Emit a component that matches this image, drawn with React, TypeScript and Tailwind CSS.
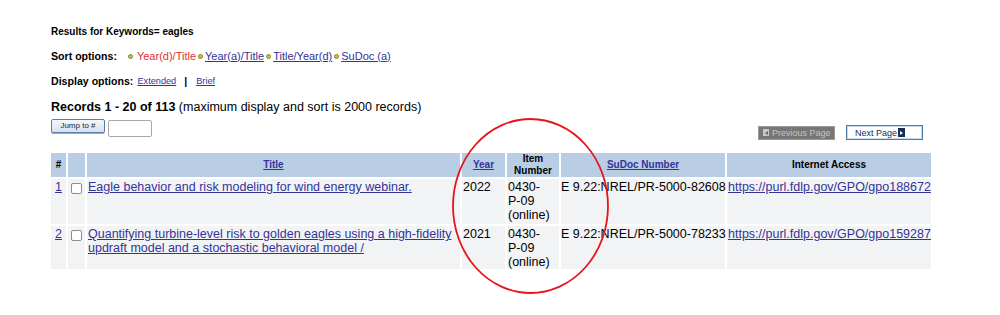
const link = 'text-[#333399] underline';

const rows = [
  {
    n: '1',
    title: 'Eagle behavior and risk modeling for wind energy webinar.',
    year: '2022',
    sudoc: 'E 9.22:NREL/PR-5000-82608',
    url: 'https://purl.fdlp.gov/GPO/gpo188672',
    pad: 'pb-[2px]',
  },
  {
    n: '2',
    title: 'Quantifying turbine-level risk to golden eagles using a high-fidelity updraft model and a stochastic behavioral model /',
    year: '2021',
    sudoc: 'E 9.22:NREL/PR-5000-78233',
    url: 'https://purl.fdlp.gov/GPO/gpo159287',
    pad: 'pb-0',
  },
];

function Bullet() {
  return <span className="inline-block w-[5px] h-[5px] rounded-full bg-[#c9c23a] border border-[#8a8420] mr-[2px] align-middle" />;
}

export default function App() {
  return (
    <div className="relative w-[1000px] h-[315px] bg-white text-black font-['Liberation_Sans',Arial,sans-serif] pl-[51px] pt-[26px]">
      <div className="text-[10px] leading-[12px] font-bold">Results for Keywords= eagles</div>

      <div className="mt-[11px] flex items-center text-[11px] leading-[14px] whitespace-nowrap">
        <span className="font-bold text-[10.6px] mr-[11px]">Sort options:</span>
        <Bullet />
        <span className="text-[#e03131] ml-[2px] mr-[2px]">Year(d)/Title</span>
        <Bullet />
        <a className={link + ' mr-[2px]'}>Year(a)/Title</a>
        <Bullet />
        <a className={link + ' mr-[2px]'}>Title/Year(d)</a>
        <Bullet />
        <a className={link}>SuDoc (a)</a>
      </div>

      <div className="mt-[11px] flex items-center text-[10.6px] leading-[14px] whitespace-nowrap">
        <span className="font-bold mr-[4px]">Display options:</span>
        <a className={link + ' text-[9.2px]'}>Extended</a>
        <span className="font-bold ml-[8px] mr-[9px]">|</span>
        <a className={link + ' text-[9.2px]'}>Brief</a>
      </div>

      <div className="mt-[12px] text-[12.5px] leading-[14px] whitespace-nowrap">
        <span className="font-bold">Records 1 - 20 of 113</span> (maximum display and sort is 2000 records)
      </div>

      <div className="mt-[5px] flex items-start w-[882px] justify-between">
        <div className="flex items-start gap-[3px]">
          <button className="w-[54px] h-[14px] text-[8px] leading-[12px] text-[#223] bg-gradient-to-b from-[#f4f8fc] to-[#d7e2ee] border border-[#5d7fa6] rounded-[2px] shadow-[0_1px_0_#9ab]">
            Jump to #
          </button>
          <div className="w-[44px] h-[17px] mt-[1px] border border-[#a8a8a8] rounded-[2px] bg-white" />
        </div>
        <div className="flex items-center gap-[11px] mt-[6px] mr-[10px]">
          <div className="w-[77px] h-[14px] bg-[#767676] border border-[#9a9a9a] flex items-center pl-[4px] gap-[3px]">
            <span className="w-[6px] h-[7px] bg-[#c8c8c8] flex items-center justify-center">
              <span className="w-0 h-0 border-y-[2px] border-y-transparent border-r-[3px] border-r-[#666]" />
            </span>
            <span className="text-[9px] leading-[12px] text-[#c4c4c4]">Previous Page</span>
          </div>
          <div className="w-[77px] h-[15px] bg-white border border-[#4e7aa3] flex items-center justify-end pr-[17px] gap-[1px] shadow-[inset_0_0_0_1px_#c8d8e8]">
            <span className="text-[9px] leading-[12px] text-[#1c2d55]">Next Page</span>
            <span className="w-[7px] h-[9px] bg-[#1c2d55] flex items-center justify-center">
              <span className="w-0 h-0 border-y-[2.5px] border-y-transparent border-l-[3px] border-l-white" />
            </span>
          </div>
        </div>
      </div>

      <div className="mt-[13px] grid grid-cols-[15px_17px_373px_43px_52px_164px_204px] gap-[2px] text-[12.5px] leading-[14px]">
        <div className="bg-[#b9cde5] flex items-center justify-center text-[10px] font-bold h-[24px]">#</div>
        <div className="bg-[#b9cde5]" />
        <div className="bg-[#b9cde5] flex items-center justify-center text-[10px] font-bold">
          <a className={link}>Title</a>
        </div>
        <div className="bg-[#b9cde5] flex items-center justify-center text-[10px] font-bold">
          <a className={link}>Year</a>
        </div>
        <div className="bg-[#b9cde5] flex items-center justify-center text-center text-[10px] leading-[12px] font-bold">
          Item<br />Number
        </div>
        <div className="bg-[#b9cde5] flex items-center justify-center text-[10px] font-bold">
          <a className={link}>SuDoc Number</a>
        </div>
        <div className="bg-[#b9cde5] flex items-center justify-center text-[10px] font-bold">Internet Access</div>

        {rows.map((r) => (
          <div key={r.n} className="contents">
            <div className="bg-[#f2f3f5] px-[2px] py-[1px] text-center">
              <a className={link}>{r.n}</a>
            </div>
            <div className="bg-[#f2f3f5] flex justify-center pt-[4px]">
              <span className="w-[11px] h-[11px] border border-[#8c8c8c] rounded-[2px] bg-white" />
            </div>
            <div className="bg-[#f2f3f5] px-[1px] py-[1px]">
              <a className={link}>{r.title}</a>
            </div>
            <div className="bg-[#f2f3f5] px-[1px] py-[1px]">{r.year}</div>
            <div className={'bg-[#f2f3f5] px-[1px] pt-[1px] ' + r.pad}>
              0430-<br />P-09<br />(online)
            </div>
            <div className="bg-[#f2f3f5] py-[1px] whitespace-nowrap">{r.sudoc}</div>
            <div className="bg-[#f2f3f5] px-[1px] py-[1px] whitespace-nowrap">
              <a className={link}>{r.url}</a>
            </div>
          </div>
        ))}
      </div>

      <svg className="absolute left-[451px] top-[117px]" width="159" height="178" viewBox="0 0 159 178">
        <ellipse cx="79.5" cy="89" rx="77.5" ry="87" fill="none" stroke="#e8141b" strokeWidth="1.8" />
      </svg>
    </div>
  );
}
